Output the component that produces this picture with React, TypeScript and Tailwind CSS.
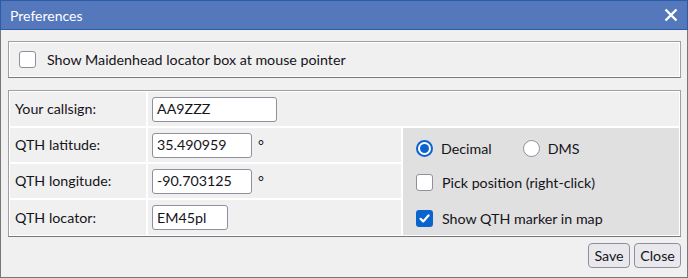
import type { ReactNode } from 'react'

function Box({ checked = false }: { checked?: boolean }) {
  if (checked) {
    return (
      <span className="flex h-[17px] w-[17px] shrink-0 items-center justify-center rounded-[3px] bg-[#0b63ce]">
        <svg width="13" height="13" viewBox="0 0 13 13" fill="none">
          <path d="M2.5 6.8 L5.2 9.4 L10.5 3.4" stroke="white" strokeWidth="2.2" strokeLinecap="round" strokeLinejoin="round" />
        </svg>
      </span>
    )
  }
  return <span className="block h-[17px] w-[17px] shrink-0 rounded-[3px] border border-[#8f8f9d] bg-white" />
}

function Radio({ checked = false }: { checked?: boolean }) {
  return (
    <span
      className={
        checked
          ? 'flex h-[17px] w-[17px] shrink-0 items-center justify-center rounded-full border-2 border-[#0b63ce] bg-white'
          : 'block h-[17px] w-[17px] shrink-0 rounded-full border border-[#8f8f9d] bg-white'
      }
    >
      {checked && <span className="block h-[9px] w-[9px] rounded-full bg-[#0b63ce]" />}
    </span>
  )
}

function Field({ value, w }: { value: string; w: string }) {
  return (
    <div className={`${w} flex h-[25px] items-center rounded-[3px] border border-[#8f8f9d] bg-white px-[4px]`}>
      {value}
    </div>
  )
}

function Label({ children }: { children: ReactNode }) {
  return <div className="flex items-center bg-[#f0f0f0] pl-[5px]">{children}</div>
}

export default function App() {
  return (
    <div
      className="flex h-[278px] w-[688px] flex-col bg-[#f0f0f0] text-[14.25px] text-[#15141a]"
      style={{ fontFamily: 'Lato, "Liberation Sans", sans-serif' }}
    >
      <div className="flex h-[30px] shrink-0 items-center justify-between border border-[#2a5ca8] bg-[#5577bb] pl-[9px] pr-[9px] text-white">
        <span className="text-[14px]">Preferences</span>
        <svg width="14" height="14" viewBox="0 0 14 14">
          <path d="M1.5 1.5 L12.5 12.5 M12.5 1.5 L1.5 12.5" stroke="white" strokeWidth="2.4" />
        </svg>
      </div>

      <div className="flex flex-1 flex-col border-x border-b border-[#777] pl-[7px] pr-[6px] pt-[11px]">
        <div className="flex h-[37px] items-center gap-[11px] border border-[#a0a0a0] border-b-[#777] pl-[10px] shadow-[inset_1px_1px_0_#fff,inset_-1px_-1px_0_#fff]">
          <Box />
          <span>Show Maidenhead locator box at mouse pointer</span>
        </div>

        <div className="mt-[12px] grid h-[147px] grid-cols-[136px_253px_1fr] grid-rows-[34px_34px_34px_35px] gap-[2px] border border-[#a0a0a0] border-b-[#777] bg-white p-[1px]">
          <Label>Your callsign:</Label>
          <div className="col-span-2 flex items-center bg-[#f0f0f0] pl-[4px]">
            <Field value="AA9ZZZ" w="w-[125px]" />
          </div>

          <Label>QTH latitude:</Label>
          <div className="flex items-center gap-[6px] bg-[#f0f0f0] pl-[4px]">
            <Field value="35.490959" w="w-[100px]" />
            <span>°</span>
          </div>
          <div className="row-span-3 flex flex-col bg-[#e0e0e0] pl-[13px] pt-[12px]">
            <div className="flex h-[17px] items-center">
              <Radio checked />
              <span className="ml-[8px]">Decimal</span>
              <span className="ml-[31px]">
                <Radio />
              </span>
              <span className="ml-[8px]">DMS</span>
            </div>
            <div className="mt-[17px] flex h-[17px] items-center gap-[9px]">
              <Box />
              <span>Pick position (right-click)</span>
            </div>
            <div className="mt-[19px] flex h-[17px] items-center gap-[9px]">
              <Box checked />
              <span>Show QTH marker in map</span>
            </div>
          </div>

          <Label>QTH longitude:</Label>
          <div className="flex items-center gap-[6px] bg-[#f0f0f0] pl-[4px]">
            <Field value="-90.703125" w="w-[100px]" />
            <span>°</span>
          </div>

          <Label>QTH locator:</Label>
          <div className="flex items-center bg-[#f0f0f0] pl-[4px]">
            <Field value="EM45pl" w="w-[76px]" />
          </div>
        </div>

        <div className="mt-[6px] flex justify-end gap-[4px]">
          <button className="h-[25px] w-[42px] rounded-[4px] border border-[#8f8f9d] bg-[#e9e9ed]">Save</button>
          <button className="h-[25px] w-[47px] rounded-[4px] border border-[#8f8f9d] bg-[#e9e9ed]">Close</button>
        </div>
      </div>
    </div>
  )
}
